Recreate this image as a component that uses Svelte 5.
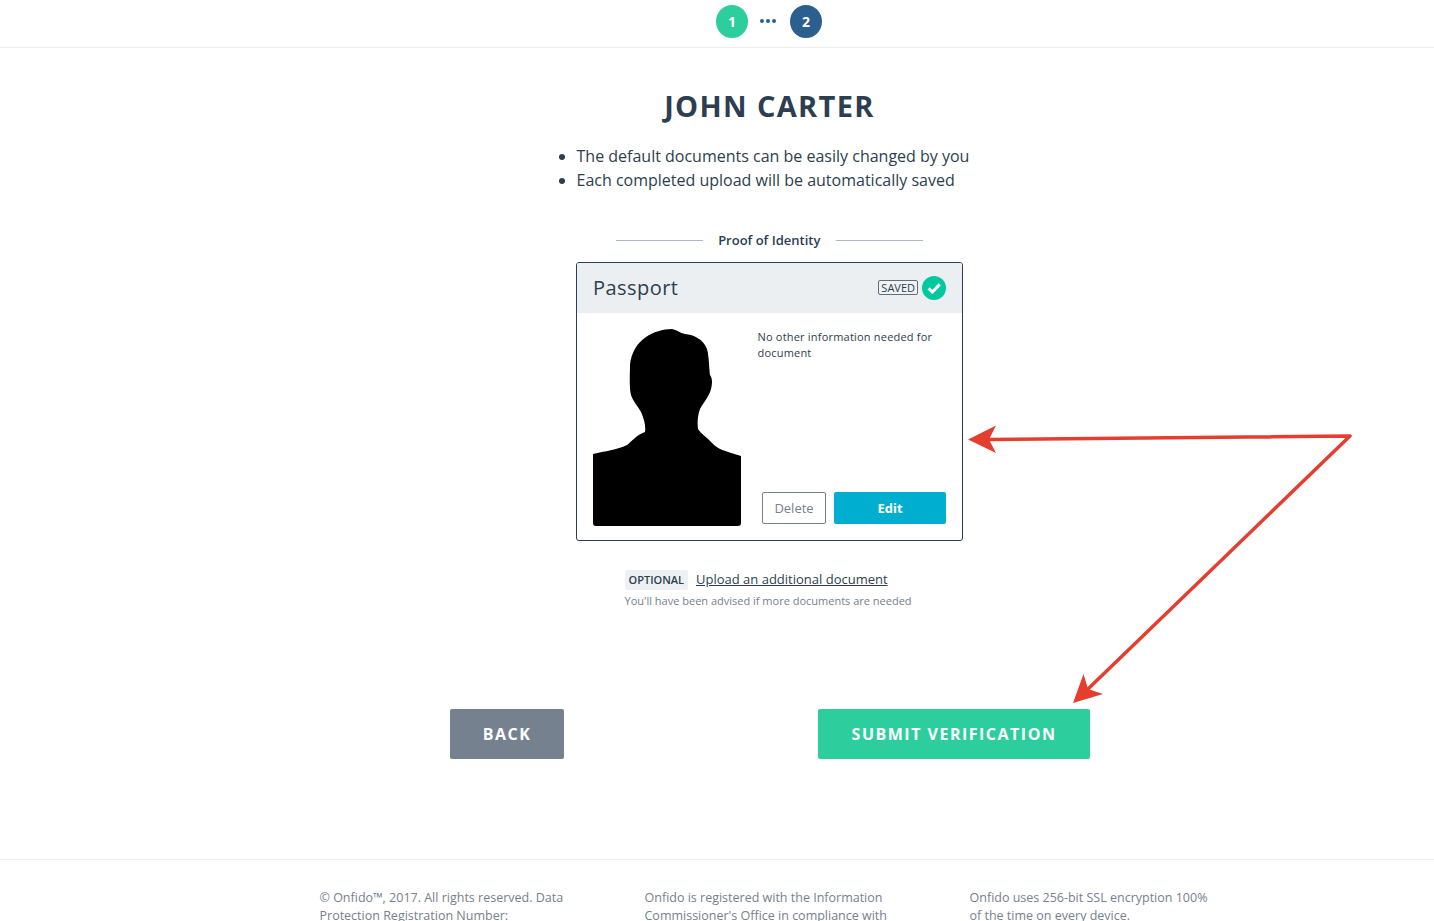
<script>
  const footer = [
    ['© Onfido™, 2017. All rights reserved. Data', 'Protection Registration Number:'],
    ['Onfido is registered with the Information', "Commissioner's Office in compliance with"],
    ['Onfido uses 256-bit SSL encryption 100%', 'of the time on every device.'],
  ];
</script>

<div class="page">
  <header class="topbar">
    <div class="steps">
      <span class="step step-done">1</span>
      <span class="dots"><i></i><i></i><i></i></span>
      <span class="step step-current">2</span>
    </div>
  </header>

  <main class="content">
    <h1>JOHN CARTER</h1>
    <ul class="notes">
      <li>The default documents can be easily changed by you</li>
      <li>Each completed upload will be automatically saved</li>
    </ul>

    <div class="section-title">
      <span class="rule"></span>
      <span>Proof of Identity</span>
      <span class="rule"></span>
    </div>

    <section class="card">
      <div class="card-head">
        <span class="card-title">Passport</span>
        <span class="saved">SAVED</span>
        <span class="tick">
          <svg width="24" height="24" viewBox="0 0 24 24">
            <path d="M6.6 12.4l3.7 3.700 7.400-7.700" fill="none" stroke="#fff" stroke-width="3" />
          </svg>
        </span>
      </div>
      <div class="card-body">
        <svg class="photo" width="148" height="197" viewBox="0 0 148 197">
          <path
            fill="#000"
            d="M0 125 C12 122 24 121 34 116 C40 111 44 106 52 103 C53 97 51 90 48 83 C44 76 40 72 38 66 C36 58 37 44 37 36 C38 24 44 14 53 8 C60 3 70 0 79 0 C84 1 87 4 92 5 C101 6 110 10 114 20 C116 27 116 38 117 46 C120 50 119 56 118 60 C116 68 110 74 107 80 C105 86 104 92 105 100 C108 105 114 108 119 114 C124 120 132 122 148 127 L148 194 Q148 197 145 197 L3 197 Q0 197 0 194 Z"
          />
        </svg>
        <div class="card-side">
          <p>No other information needed for document</p>
          <div class="card-actions">
            <button class="btn-delete">Delete</button>
            <button class="btn-edit">Edit</button>
          </div>
        </div>
      </div>
    </section>

    <div class="extra">
      <div class="extra-line">
        <span class="optional">OPTIONAL</span>
        <a href="#upload">Upload an additional document</a>
      </div>
      <p>You'll have been advised if more documents are needed</p>
    </div>

    <div class="nav">
      <button class="btn-back">BACK</button>
      <button class="btn-submit">SUBMIT VERIFICATION</button>
    </div>
  </main>

  <footer>
    <div class="footer-cols">
      {#each footer as lines}
        <div class="footer-col">
          {#each lines as line}
            <div>{line}</div>
          {/each}
        </div>
      {/each}
    </div>
  </footer>

  <!-- annotation arrows drawn over the page -->
  <svg class="arrows" width="1434" height="921" viewBox="0 0 1434 921">
    <path d="M1350 436 L990 439.500 M1350 436 L1088 689" fill="none" stroke="#e53e30" stroke-width="3.5" stroke-linecap="round" />
    <path d="M968 439.500 L996 425.500 L989 439.500 L996 453 Z" fill="#e53e30" />
    <path d="M1073 703 L1083.500 674 L1088 689 L1103 694 Z" fill="#e53e30" />
  </svg>
</div>

<style>
  :global(body) {
    margin: 0;
    background: #fff;
  }

  .page {
    position: relative;
    height: 921px;
    overflow: hidden;
    font-family: 'Open Sans', sans-serif;
    color: #2c3e50;
  }

  .topbar {
    height: 42px;
    border-bottom: 1px solid #eceff1;
    padding: 5px 0 0 450px;
  }

  .steps {
    width: 640px;
    display: flex;
    justify-content: center;
    align-items: center;
    gap: 12px;
    height: 33px;
    margin-left: -1px;
  }

  .step {
    width: 32px;
    height: 33px;
    border-radius: 50%;
    color: #fff;
    font-size: 14px;
    font-weight: 700;
    display: flex;
    align-items: center;
    justify-content: center;
  }
  .step-done { background: #2dce9d; }
  .step-current { background: #2a5f8f; }

  .dots {
    display: flex;
    gap: 2px;
    width: 18px;
    margin-top: -1px;
  }
  .dots i {
    width: 4px;
    height: 4px;
    border-radius: 50%;
    background: #2a5f8f;
  }

  .content {
    width: 640px;
    margin-left: 450px;
    display: flex;
    flex-direction: column;
    align-items: center;
  }

  h1 {
    margin: 39px 0 0 -1px;
    font-size: 29px;
    line-height: 38px;
    font-weight: 700;
    letter-spacing: 1.350px;
  }

  .notes {
    margin: 19px 0 0 108.500px;
    padding: 0 0 0 18px;
    align-self: flex-start;
    font-size: 16px;
    line-height: 24px;
    list-style: disc;
  }

  .section-title {
    margin-top: 38px;
    display: flex;
    align-items: center;
    gap: 15.500px;
    font-size: 13px;
    font-weight: 600;
    line-height: 20px;
    margin-left: -1.500px;
  }
  .rule {
    width: 87px;
    height: 1px;
    background: #aab7c6;
  }

  .card {
    margin-top: 12px;
    width: 387px;
    height: 279px;
    box-sizing: border-box;
    border: 1px solid #2c3e50;
    border-radius: 3px;
    margin-left: -1px;
    display: flex;
    flex-direction: column;
    overflow: hidden;
  }

  .card-head {
    height: 50px;
    background: #ebeff2;
    display: flex;
    align-items: center;
    padding: 0 16px;
    flex-shrink: 0;
  }
  .card-title {
    font-size: 20px;
    line-height: 26px;
    font-weight: 400;
    margin-right: auto;
    letter-spacing: 0.450px;
  }
  .saved {
    font-size: 11px;
    line-height: 13px;
    padding: 0 2px;
    border: 1px solid #5f6d7c;
    border-radius: 2px;
    background: #f0f2f4;
    margin-right: 4px;
    margin-top: -1px;
  }
  .tick {
    width: 24px;
    height: 24px;
    border-radius: 50%;
    background: #00c9a0;
    display: flex;
  }

  .card-body {
    display: flex;
    padding: 16px 16px 14px;
    flex: 1;
    gap: 16px;
  }
  .photo {
    flex-shrink: 0;
  }
  .card-side {
    flex: 1;
    display: flex;
    flex-direction: column;
    justify-content: space-between;
    padding-bottom: 2px;
  }
  .card-side p {
    margin: 0;
    padding-left: 0.500px;
    font-size: 11px;
    line-height: 16px;
    font-weight: 400;
    letter-spacing: 0.200px;
    color: #2c3e50;
  }
  .card-actions {
    display: flex;
    justify-content: flex-end;
    gap: 8px;
  }
  .card-actions button {
    height: 32px;
    border-radius: 2px;
    font-family: inherit;
    font-size: 13px;
    padding: 0;
  }
  .btn-delete {
    width: 64px;
    background: #fff;
    border: 1px solid #75818f;
    color: #75818f;
  }
  .btn-edit {
    width: 112px;
    background: #00afd0;
    border: none;
    color: #fff;
    font-weight: 700;
  }

  .extra {
    margin-top: 29px;
    width: 288px;
    margin-left: -3px;
  }
  .extra-line {
    display: flex;
    align-items: center;
    gap: 8px;
    height: 20px;
  }
  .optional {
    font-size: 11px;
    font-weight: 600;
    line-height: 20px;
    padding: 0 4px;
    background: #eef1f3;
    border-radius: 2px;
  }
  .extra-line a {
    font-size: 13px;
    line-height: 18px;
    margin-top: -2px;
    color: #2c3e50;
  }
  .extra p {
    margin: 2px 0 0;
    font-size: 11px;
    line-height: 18px;
    color: #75818f;
  }

  .nav {
    margin-top: 99px;
    width: 100%;
    display: flex;
    justify-content: space-between;
  }
  .nav button {
    height: 50px;
    border: none;
    border-radius: 2px;
    color: #fff;
    font-family: inherit;
    font-size: 16px;
    font-weight: 700;
    letter-spacing: 1.500px;
    padding: 0;
  }
  .btn-back {
    width: 114px;
    background: #75818f;
  }
  .btn-submit {
    width: 272px;
    background: #2dce9d;
  }

  footer {
    margin-top: 100px;
    border-top: 1px solid #eceff1;
    padding: 29px 0 0 319.500px;
  }
  .footer-cols {
    display: flex;
    gap: 65px;
  }
  .footer-col {
    width: 260px;
    font-size: 12.500px;
    line-height: 18px;
    color: #75818f;
  }

  .arrows {
    position: absolute;
    top: 0;
    left: 0;
    pointer-events: none;
  }
</style>
